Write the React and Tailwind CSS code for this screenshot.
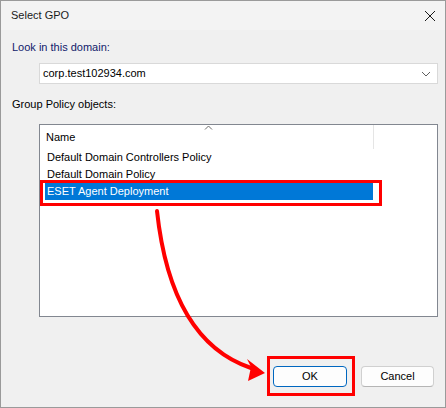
export default function App() {
  const font = { fontFamily: '"Segoe UI", "Liberation Sans", Arial, sans-serif' };
  return (
    <div className="relative w-[446px] h-[408px] border border-[#9a9a9a] bg-[#f0f0f0] text-[11px] text-black overflow-hidden" style={font}>
      {/* Title bar */}
      <div className="h-[29px] bg-[#f3f3f3] flex items-center justify-between pl-[10px] pr-[8px]">
        <span className="text-[11px] text-[#1a1a1a]">Select GPO</span>
        <svg width="12" height="12" viewBox="0 0 12 12" className="mr-[1px]">
          <path d="M1 1 L11 11 M11 1 L1 11" stroke="#1a1a1a" strokeWidth="1" fill="none" />
        </svg>
      </div>

      {/* Body */}
      <div className="flex flex-col pl-[11px] pr-[7px]">
        <div className="mt-[9px] h-[16px] leading-[16px] text-[#101a6b]">Look in this domain:</div>
        <div className="mt-[8px] ml-[27px] h-[21px] bg-white border border-[#d9d9d9] flex items-center justify-between pl-[3px] pr-[6px]">
          <span>corp.test102934.com</span>
          <svg width="10" height="6" viewBox="0 0 10 6">
            <path d="M1 1 L5 5 L9 1" stroke="#606060" strokeWidth="1" fill="none" />
          </svg>
        </div>
        <div className="mt-[12px] h-[16px] leading-[16px]">Group Policy objects:</div>

        {/* List view */}
        <div className="mt-[12px] ml-[27px] h-[193px] bg-white border border-[#828790] flex flex-col">
          <div className="relative h-[24px] flex items-center">
            <span className="pl-[6px]">Name</span>
            <div className="absolute left-[333px] top-[0px] w-px h-[24px] bg-[#e5e5e5]" />
            <svg className="absolute left-[164px] top-[0px]" width="9" height="5" viewBox="0 0 9 5">
              <path d="M1 4.5 L4.5 1 L8 4.5" stroke="#6d6d6d" strokeWidth="1" fill="none" />
            </svg>
          </div>
          <div className="flex flex-col pl-[5px]">
            <div className="h-[17px] leading-[17px] pl-[2px] w-[328px]">Default Domain Controllers Policy</div>
            <div className="h-[17px] leading-[17px] pl-[2px] w-[328px]">Default Domain Policy</div>
            <div className="h-[17px] leading-[17px] pl-[2px] w-[328px] bg-[#0078d7] text-white">ESET Agent Deployment</div>
          </div>
        </div>

        {/* Buttons */}
        <div className="mt-[49px] flex justify-end gap-[14px] pr-[4px]">
          <button className="w-[74px] h-[21px] rounded-[4px] bg-[#fdfdfd] border border-[#0067c0] text-[11px]" style={font}>OK</button>
          <button className="w-[73px] h-[21px] rounded-[4px] bg-[#fdfdfd] border border-[#d0d0d0] border-b-[#b5b5b5] text-[11px]" style={font}>Cancel</button>
        </div>
      </div>

      {/* Annotations */}
      <div className="absolute left-[39px] top-[179px] w-[342px] h-[26px] border-[3px] border-[#ff0000]" />
      <div className="absolute left-[266px] top-[355px] w-[88px] h-[40px] border-[3px] border-[#ff0000]" />
      <svg className="absolute left-0 top-0 pointer-events-none" width="446" height="408" viewBox="0 0 446 408">
        <path d="M156 210 Q170 340 250 367" stroke="#ff0000" strokeWidth="4" fill="none" strokeLinecap="round" />
        <polygon points="264,372 246,358 250,366 247,380" fill="#ff0000" />
      </svg>
    </div>
  );
}
